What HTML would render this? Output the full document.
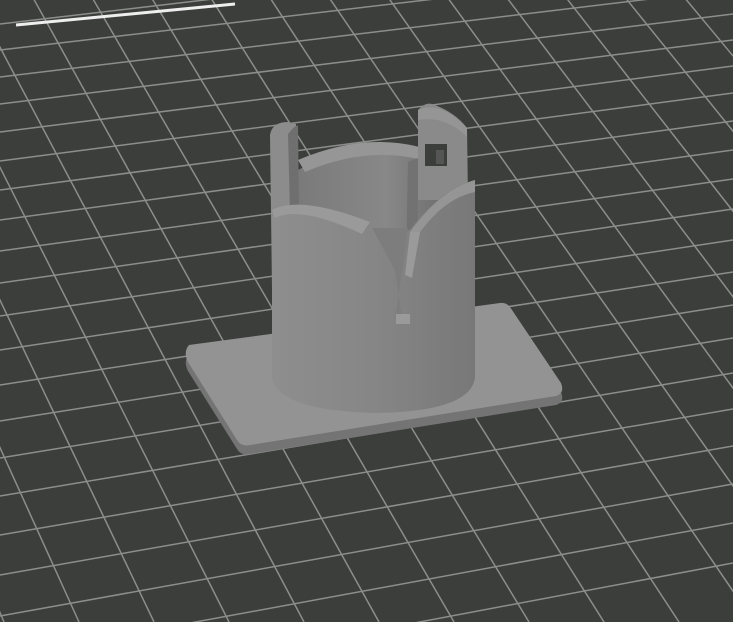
<!DOCTYPE html>
<html><head><meta charset="utf-8"><style>
html,body{margin:0;padding:0;background:#3c3e3c;width:733px;height:622px;overflow:hidden}
svg{display:block}
</style></head><body>
<svg width="733" height="622" viewBox="0 0 733 622" xmlns="http://www.w3.org/2000/svg">
<defs>
<linearGradient id="body" x1="0" x2="1" y1="0" y2="0">
<stop offset="0" stop-color="#8e8e8e"/><stop offset="0.5" stop-color="#868686"/><stop offset="1" stop-color="#787878"/>
</linearGradient>
<linearGradient id="inner" x1="0" x2="1" y1="0" y2="0">
<stop offset="0" stop-color="#7a7a7a"/><stop offset="0.6" stop-color="#888"/><stop offset="1" stop-color="#6e6e6e"/>
</linearGradient>
</defs>
<rect width="733" height="622" fill="#3c3e3c"/>
<g stroke="#8c8e8c" stroke-width="1.5" fill="none">
<line x1="-1267" y1="-2348" x2="-596" y2="622"/>
<line x1="-1267" y1="-2348" x2="-521" y2="622"/>
<line x1="-1267" y1="-2348" x2="-446" y2="622"/>
<line x1="-1267" y1="-2348" x2="-371" y2="622"/>
<line x1="-1267" y1="-2348" x2="-296" y2="622"/>
<line x1="-1267" y1="-2348" x2="-221" y2="622"/>
<line x1="-1267" y1="-2348" x2="-146" y2="622"/>
<line x1="-1267" y1="-2348" x2="-71" y2="622"/>
<line x1="-1267" y1="-2348" x2="4" y2="622"/>
<line x1="-1267" y1="-2348" x2="79" y2="622"/>
<line x1="-1267" y1="-2348" x2="154" y2="622"/>
<line x1="-1267" y1="-2348" x2="229" y2="622"/>
<line x1="-1267" y1="-2348" x2="304" y2="622"/>
<line x1="-1267" y1="-2348" x2="379" y2="622"/>
<line x1="-1267" y1="-2348" x2="454" y2="622"/>
<line x1="-1267" y1="-2348" x2="529" y2="622"/>
<line x1="-1267" y1="-2348" x2="604" y2="622"/>
<line x1="-1267" y1="-2348" x2="679" y2="622"/>
<line x1="-1267" y1="-2348" x2="754" y2="622"/>
<line x1="-1267" y1="-2348" x2="829" y2="622"/>
<line x1="-1267" y1="-2348" x2="904" y2="622"/>
<line x1="-1267" y1="-2348" x2="979" y2="622"/>
<line x1="-1267" y1="-2348" x2="1054" y2="622"/>
<line x1="-1267" y1="-2348" x2="1129" y2="622"/>
<line x1="-1267" y1="-2348" x2="1204" y2="622"/>
<line x1="-1267" y1="-2348" x2="1279" y2="622"/>
<line x1="0" y1="24" x2="733" y2="-62"/>
<line x1="0" y1="50" x2="733" y2="-36"/>
<line x1="0" y1="77" x2="733" y2="-11"/>
<line x1="0" y1="104" x2="733" y2="14"/>
<line x1="0" y1="132" x2="733" y2="40"/>
<line x1="0" y1="161" x2="733" y2="66"/>
<line x1="0" y1="190" x2="733" y2="93"/>
<line x1="0" y1="220" x2="733" y2="121"/>
<line x1="0" y1="251" x2="733" y2="150"/>
<line x1="0" y1="283" x2="733" y2="179"/>
<line x1="0" y1="316" x2="733" y2="209"/>
<line x1="0" y1="350" x2="733" y2="240"/>
<line x1="0" y1="385" x2="733" y2="272"/>
<line x1="0" y1="421" x2="733" y2="305"/>
<line x1="0" y1="458" x2="733" y2="338"/>
<line x1="0" y1="496" x2="733" y2="373"/>
<line x1="0" y1="535" x2="733" y2="409"/>
<line x1="0" y1="575" x2="733" y2="446"/>
<line x1="0" y1="616" x2="733" y2="484"/>
<line x1="0" y1="658" x2="733" y2="523"/>
<line x1="0" y1="701" x2="733" y2="563"/>
</g>
<line x1="16" y1="25" x2="235" y2="4" stroke="#eeeeee" stroke-width="3"/>
<path d="M189 345 L500 303 Q506 302 510 307 L561 383 Q565 393 556 396 L250 445 Q241 447 237 440 L188 362 Q183 352 189 345 Z" fill="#747474" transform="translate(0,9)"/>
<path d="M189 345 L500 303 Q506 302 510 307 L561 383 Q565 393 556 396 L250 445 Q241 447 237 440 L188 362 Q183 352 189 345 Z" fill="#939393"/>
<path d="M298 170 Q370 130 445 160 L445 250 L298 250 Z" fill="url(#inner)"/>
<path d="M298 160 Q380 125 450 158 L445 168 Q380 140 305 172 Z" fill="#969696"/>
<path d="M270 135 Q272 122 288 122 L296 124 L298 290 L272 290 Z" fill="#8c8c8c"/>
<path d="M288 134 Q296 124 298 126 L300 290 L292 290 Z" fill="#6f6f6f"/>
<path d="M418 110 Q425 102 432 104 Q455 112 467 128 L468 200 L418 200 Z" fill="#8a8a8a"/>
<path d="M418 110 Q440 100 467 128 L467 137 Q445 115 418 120 Z" fill="#959595"/>
<rect x="425" y="144" width="22" height="22" fill="#3c3e3c"/>
<rect x="436" y="150" width="8" height="14" fill="#555"/>
<path d="M408 162 L418 158 L418 260 L406 262 Z" fill="#727272"/>
<path d="M272 210 Q300 200 370 230 L410 230 Q440 190 475 180 L475 378 Q470 412 373 413 Q278 410 272 378 Z" fill="url(#body)"/>
<path d="M272 210 Q300 195 370 222 L362 234 Q300 205 275 218 Z" fill="#9a9a9a"/>
<path d="M410 232 Q440 190 475 180 L475 192 Q445 198 420 232 Z" fill="#959595"/>
<path d="M372 228 L408 228 L398 300 L395 318 L402 318 L395 270 Z" fill="#7d7d7d"/>
<path d="M410 232 L420 232 L412 278 L405 275 Z" fill="#9a9a9a"/>
<rect x="396" y="314" width="14" height="10" fill="#9a9a9a"/>
</svg>
</body></html>
